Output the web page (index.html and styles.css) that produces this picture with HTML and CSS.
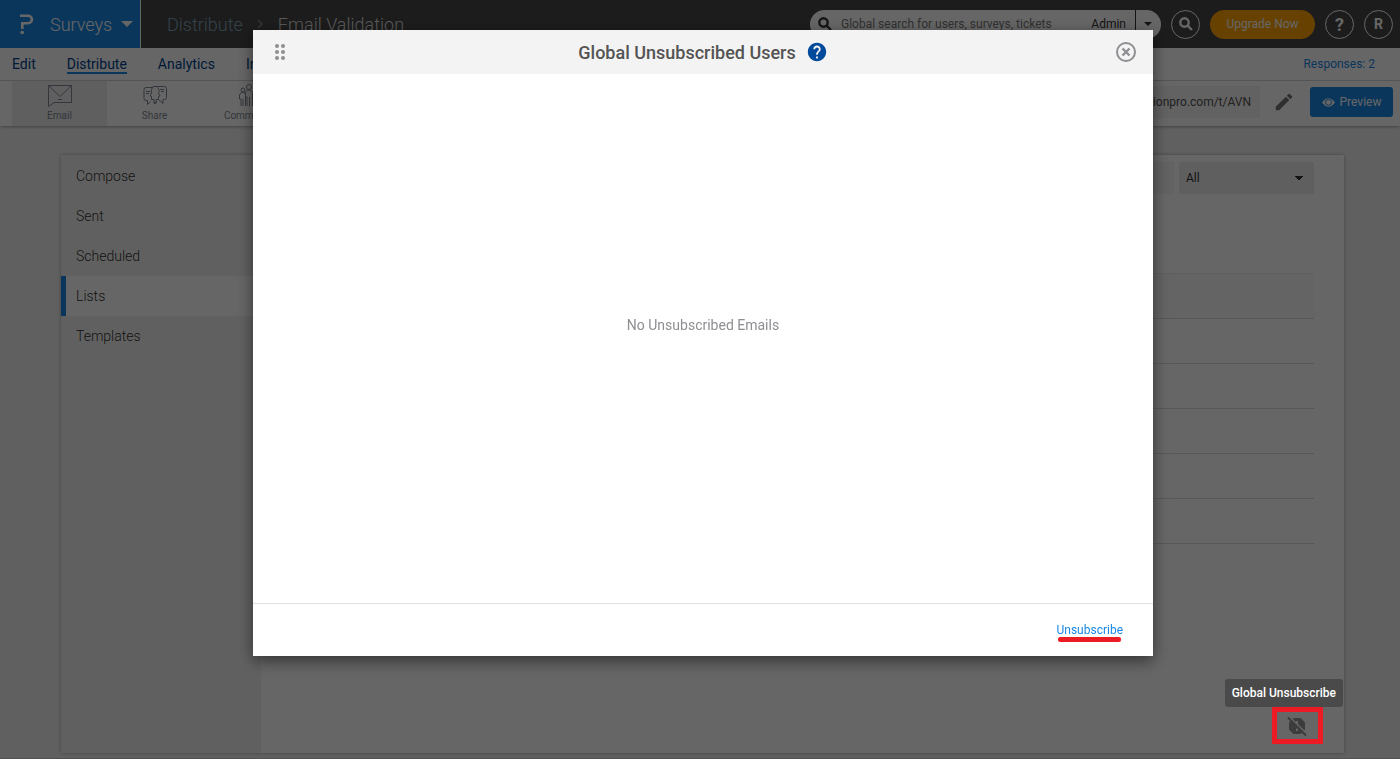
FILE: index.html
```html
<!DOCTYPE html>
<html lang="en">
<head>
    <meta charset="UTF-8">
    <meta name="viewport" content="width=device-width, initial-scale=1.0">
    <title>Email Validation</title>
    <link rel="stylesheet" href="styles.css">
</head>
<body>
    <header class="topbar">
        <button class="brand">
            <svg width="14" height="21" viewBox="0 0 14 21" fill="none" stroke="currentColor" stroke-width="2.600">
                <path d="M0 1.800h8.200a3.700 3.700 0 0 1 0 7.400H2.300V15"/>
                <circle cx="2.200" cy="18.500" r="1.800" fill="currentColor" stroke="none"/>
            </svg>
            <span>Surveys</span>
            <svg width="12" height="6" viewBox="0 0 12 6" fill="currentColor"><path d="M0 0h12L6 6z"/></svg>
        </button>
        <nav class="crumbs">
            <a href="#" class="crumb-link">Distribute</a>
            <svg width="7" height="10" viewBox="0 0 7 10" fill="none" stroke="currentColor" stroke-width="1.500"><path d="M1 1l4 4-4 4"/></svg>
            <span>Email Validation</span>
        </nav>
        <div class="top-actions">
            <div class="search">
                <svg width="14" height="14" viewBox="0 0 14 14" fill="none" stroke="currentColor" stroke-width="2.400"><circle cx="5.500" cy="5.500" r="4.200"/><path d="M8.600 8.600l4.400 4.400"/></svg>
                <input type="text" aria-label="Global search" placeholder="Global search for users, surveys, tickets">
                <span class="search-scope">Admin</span>
                <button class="search-toggle" aria-label="Change scope">
                    <svg width="8" height="4" viewBox="0 0 8 4" fill="currentColor"><path d="M0 0h8L4 4z"/></svg>
                </button>
            </div>
            <button class="circle" aria-label="Search">
                <svg width="14" height="14" viewBox="0 0 14 14" fill="none" stroke="currentColor" stroke-width="2.400"><circle cx="5.500" cy="5.500" r="4.200"/><path d="M8.600 8.600l4.400 4.400"/></svg>
            </button>
            <button class="upgrade">Upgrade Now</button>
            <button class="circle help" aria-label="Help">?</button>
            <button class="circle">R</button>
        </div>
    </header>

    <nav class="tabs">
        <a href="#">Edit</a>
        <a href="#" class="active">Distribute</a>
        <a href="#">Analytics</a>
        <a href="#">Integration</a>
        <a href="#" class="responses">Responses: 2</a>
    </nav>

    <div class="toolbar">
        <button class="tool active">
            <svg width="24" height="24" viewBox="0 0 24 24" fill="none" stroke="currentColor"><path d="M.5 1.500h23v17H6L.5 22.500zM.5 1.500L12 12.500l11.500-11M10 15.500h4"/></svg>
            <span>Email</span>
        </button>
        <button class="tool">
            <svg width="24" height="24" viewBox="0 0 24 24" fill="none" stroke="currentColor">
                <path d="M9 3.500H3a2 2 0 0 0-2 2v9a2 2 0 0 0 2 2h1.500v4l3-3M13 2.500h8.500a2 2 0 0 1 2 2v9a2 2 0 0 1-2 2H20v4l-4-3.500"/>
                <path d="M10 3.500c-2 1-2 3-1.500 5.500L7 12l1.500.5v3h2.500v4l3-2M14 3.500c2 1 3 3 1.500 5.500l1.500 3-1.500.5v3H13v4l-2-1M9 3.500l2-1h3M3 7.500h4M3 9.500h3M17 5.500h4M18 7.500h3"/>
            </svg>
            <span>Share</span>
        </button>
        <button class="tool">
            <svg width="24" height="24" viewBox="0 0 24 24" fill="none" stroke="currentColor">
                <circle cx="5" cy="6" r="2"/><circle cx="11" cy="3" r="2.500"/><circle cx="18" cy="6" r="2"/>
                <path d="M3 22v-7H1.500v-4l2-2.500h3l1 2V22M5 15v7M9 22V13H7.500V8.500l2-2.500h3l2 2.500V22M11.500 13v9M16.500 22v-7H15v-4l1.500-2.500h3l2 2.500v4H20v7M18.500 15v7"/>
            </svg>
            <span>Community</span>
        </button>
        <div class="share-link">
            <input type="text" aria-label="Survey link" value="questionpro.com/t/AVN">
            <button class="edit-link" aria-label="Edit link">
                <svg width="22" height="22" viewBox="0 0 24 24" fill="currentColor"><path d="M3 17.250V21h3.750L17.810 9.940l-3.750-3.750L3 17.250zM20.710 7.040a1 1 0 0 0 0-1.410l-2.340-2.340a1 1 0 0 0-1.410 0l-1.830 1.830 3.750 3.750 1.830-1.830z"/></svg>
            </button>
            <button class="preview">
                <svg width="13" height="9" viewBox="0 0 13 9"><path d="M0 4.500Q6.500-4 13 4.500 6.500 13 0 4.500z" fill="currentColor"/><circle cx="6.500" cy="4.300" r="3" fill="none" stroke="#1b87e6"/></svg>
                <span>Preview</span>
            </button>
        </div>
    </div>

    <main class="panel">
        <nav class="side">
            <a href="#">Compose</a>
            <a href="#">Sent</a>
            <a href="#">Scheduled</a>
            <a href="#" class="active">Lists</a>
            <a href="#">Templates</a>
        </nav>
        <section class="content">
            <div class="filters">
                <input type="text" aria-label="Search lists">
                <select aria-label="Filter lists">
                    <option>All</option>
                </select>
            </div>
            <table class="lists">
                <thead><tr><th></th></tr></thead>
                <tbody>
                    <tr><td></td></tr>
                    <tr><td></td></tr>
                    <tr><td></td></tr>
                    <tr><td></td></tr>
                    <tr><td></td></tr>
                </tbody>
            </table>
            <div class="global-unsub">
                <span class="tooltip" role="tooltip" id="unsubTip">Global Unsubscribe</span>
                <button aria-labelledby="unsubTip">
                    <svg width="20" height="20" viewBox="0 0 20 20">
                        <path d="M6.500 2h7L18 6.500v7L13.500 18h-7L2 13.500v-7z" fill="currentColor"/>
                        <path d="M10 5v5.500M10 12.500v2.500" stroke="#666" stroke-width="2"/>
                        <path d="M2 .5L20 18.500" stroke="#666" stroke-width="2"/>
                        <path d="M1 1.500L19 19.500" stroke="currentColor" stroke-width="2"/>
                    </svg>
                </button>
            </div>
        </section>
    </main>
    <footer class="page-end"></footer>

    <div class="overlay">
        <div class="modal" role="dialog" aria-modal="true" aria-labelledby="modalTitle">
            <div class="modal-header">
                <svg class="drag" width="10" height="16" viewBox="0 0 10 16" fill="currentColor"><circle cx="2" cy="2" r="2"/><circle cx="8" cy="2" r="2"/><circle cx="2" cy="8" r="2"/><circle cx="8" cy="8" r="2"/><circle cx="2" cy="14" r="2"/><circle cx="8" cy="14" r="2"/></svg>
                <h2 id="modalTitle">Global Unsubscribed Users
                    <svg width="22" height="22" viewBox="0 0 24 24" fill="currentColor"><path d="M12 2C6.480 2 2 6.480 2 12s4.480 10 10 10 10-4.480 10-10S17.520 2 12 2zm1 17h-2v-2h2v2zm2.070-7.750l-.9.92C13.450 12.900 13 13.500 13 15h-2v-.5c0-1.100.45-2.100 1.170-2.830l1.240-1.260c.37-.36.59-.86.59-1.410 0-1.100-.9-2-2-2s-2 .9-2 2H8c0-2.210 1.790-4 4-4s4 1.790 4 4c0 .88-.36 1.680-.93 2.250z"/></svg>
                </h2>
                <button class="close" aria-label="Close">
                    <svg width="20" height="20" viewBox="0 0 20 20" fill="none" stroke="currentColor"><circle cx="10" cy="10" r="9" stroke-width="2"/><path d="M6.500 6.500l7 7M13.500 6.500l-7 7" stroke-width="2.400"/></svg>
                </button>
            </div>
            <div class="modal-body">No Unsubscribed Emails</div>
            <div class="modal-footer">
                <button class="unsubscribe">Unsubscribe</button>
            </div>
        </div>
    </div>
</body>
</html>
```

FILE: styles.css
```css
* {
    margin: 0;
    padding: 0;
    box-sizing: border-box;
}

body {
    font-family: Roboto, "Open Sans", sans-serif;
    font-size: 14px;
    color: #545e6b;
    background: #f1f1f1;
    min-height: 100vh;
    display: flex;
    flex-direction: column;
}

a {
    color: inherit;
    text-decoration: none;
}

button,
input,
select {
    font: inherit;
    color: inherit;
    border: none;
    background: none;
}

button {
    cursor: pointer;
}

svg {
    flex: none;
}

/* Top bar */
.topbar {
    display: flex;
    align-items: center;
    height: 48px;
    background: #474747;
    color: #fff;
}

.brand {
    display: flex;
    align-items: center;
    width: 141px;
    height: 48px;
    padding: 0 7px 0 20px;
    background: #1b87e6;
    border-right: 1px solid #fff;
    font-size: 18px;
    font-weight: 300;
}

.brand span {
    margin: 0 auto 0 16px;
}

.crumbs {
    display: flex;
    align-items: center;
    gap: 14px;
    padding-left: 26px;
    font-size: 18px;
    font-weight: 300;
    color: #ddd;
}

.crumbs svg {
    color: #888;
}

.crumb-link {
    color: #7fa6b8;
}

.top-actions {
    display: flex;
    align-items: center;
    gap: 10px;
    margin-left: auto;
    padding-right: 7px;
}

.search {
    display: flex;
    align-items: center;
    width: 351px;
    height: 29px;
    padding-left: 8px;
    border-radius: 15px;
    background: #fff;
    color: #333;
}

.search input {
    flex: 1;
    min-width: 0;
    padding-left: 9px;
    font-size: 12px;
}

.search input::placeholder {
    color: #777;
}

.search-scope {
    padding-right: 9px;
    font-size: 12px;
}

.search-toggle {
    display: flex;
    align-items: center;
    width: 26px;
    height: 29px;
    padding-left: 8px;
    border-left: 1px solid #333;
}

.circle {
    display: flex;
    align-items: center;
    justify-content: center;
    width: 29px;
    height: 29px;
    border: 1px solid #fff;
    border-radius: 50%;
    font-weight: 700;
}

.help {
    font-size: 18px;
}

.upgrade {
    width: 105px;
    height: 29px;
    border-radius: 15px;
    background: #ffa300;
    font-size: 12px;
}

/* Main tabs */
.tabs {
    display: flex;
    align-items: center;
    gap: 31px;
    height: 33px;
    padding: 0 25px 0 12px;
    background: #fff;
    border-bottom: 1px solid #ddd;
    color: #003f8c;
}

.tabs .active {
    border-bottom: 2px solid #1b87e6;
    margin-top: 2px;
}

.tabs .responses {
    margin-left: auto;
    font-size: 12px;
    color: #1b87e6;
}

/* Distribution tools */
.toolbar {
    display: flex;
    height: 45px;
    padding: 0 7px 0 12px;
    background: #fff;
    box-shadow: 0 1px 3px rgba(0, 0, 0, 0.3);
    color: #808894;
}

.tool {
    display: flex;
    flex-direction: column;
    align-items: center;
    gap: 2px;
    width: 95px;
    padding-top: 3px;
    font-size: 10px;
}

.tool.active {
    background: #eee;
}

.share-link {
    display: flex;
    align-items: center;
    height: 42px;
    margin-left: auto;
    color: #545454;
}

.share-link input {
    width: 240px;
    height: 32px;
    padding-right: 9px;
    background: #f5f5f5;
    font-size: 12px;
    text-align: right;
}

.edit-link {
    display: flex;
    padding: 0 15px 0 13px;
    color: #777;
}

.preview {
    display: flex;
    align-items: center;
    justify-content: center;
    gap: 5px;
    width: 83px;
    height: 30px;
    border-radius: 3px;
    background: #1b87e6;
    color: #fff;
    font-size: 12px;
}

/* Panel */
.panel {
    flex: 1;
    display: flex;
    margin: 29px 56px 0 61px;
    background: #fff;
    box-shadow: 0 0 4px rgba(0, 0, 0, 0.3);
}

.side {
    width: 200px;
    background: #f1f1f1;
    font-weight: 300;
    color: #333;
}

.side a {
    display: block;
    padding-left: 15px;
    line-height: 40px;
}

.side .active {
    padding-left: 10px;
    border-left: 5px solid #1b87e6;
    background: #fff;
}

.side a:first-child {
    margin-top: 1px;
}

.content {
    flex: 1;
    display: flex;
    flex-direction: column;
    padding: 7px 30px 9px;
}

.filters {
    display: flex;
    justify-content: flex-end;
    gap: 5px;
    margin-bottom: 79px;
}

.filters input {
    width: 200px;
    background: #f5f5f5;
}

.filters select {
    width: 135px;
    height: 32px;
    padding: 0 7px;
    border-radius: 2px;
    appearance: none;
    background-color: #eee;
    background-image: conic-gradient(from -45deg at 50% 100%, #333 90deg, transparent 0);
    background-repeat: no-repeat;
    background-position: right 11px center;
    background-size: 8px 4px;
    font-size: 12px;
    color: #333;
}

.lists {
    width: 100%;
    border-collapse: collapse;
}

.lists th,
.lists td {
    height: 45px;
    border-bottom: 1px solid #ddd;
}

.lists th {
    background: #fafafa;
    border-top: 1px solid #eee;
}

/* Global unsubscribe shortcut, stays above the overlay */
.global-unsub {
    position: relative;
    z-index: 30;
    align-self: flex-end;
    margin-top: auto;
    margin-right: -9px;
    border: 5px solid #ed1c24;
}

.global-unsub button {
    display: flex;
    padding: 4px 11px 3px 10px;
    color: #3c3c3c;
}

.tooltip {
    position: absolute;
    bottom: 100%;
    right: -25px;
    margin-bottom: 5px;
    padding: 0 7px;
    border-radius: 3px;
    background: #4a4a4a;
    color: #fff;
    font-size: 12px;
    font-weight: 500;
    line-height: 28px;
    white-space: nowrap;
}

.page-end {
    margin-top: 5px;
    border-bottom: 1px solid #ccc;
}

/* Modal */
.overlay {
    position: fixed;
    inset: 0;
    z-index: 20;
    display: flex;
    justify-content: center;
    align-items: flex-start;
    padding: 30px 0 0 6px;
    background: rgba(0, 0, 0, 0.6);
}

.modal {
    width: 900px;
    max-width: 100%;
    background: #fff;
    box-shadow: 0 5px 15px rgba(0, 0, 0, 0.5);
}

.modal-header {
    display: grid;
    grid-template-columns: 1fr auto 1fr;
    align-items: center;
    height: 44px;
    padding: 0 17px;
    background: #f3f3f3;
    color: #8e8e93;
}

.drag {
    margin-left: 5px;
}

.modal-header h2 {
    display: flex;
    align-items: center;
    gap: 10px;
    font-size: 18px;
    font-weight: 500;
    color: #545454;
}

.modal-header h2 svg {
    color: #004a9c;
}

.close {
    display: flex;
    justify-self: end;
}

.modal-body {
    display: flex;
    align-items: center;
    justify-content: center;
    min-height: 529px;
    padding-bottom: 27px;
    color: #8e8e93;
}

.modal-footer {
    display: flex;
    justify-content: flex-end;
    padding: 16px 30px;
    border-top: 1px solid #e0e0e0;
}

.unsubscribe {
    position: relative;
    font-size: 12px;
    line-height: 20px;
    color: #1b87e6;
}

.unsubscribe::after {
    content: "";
    position: absolute;
    left: 2px;
    right: 2px;
    top: 100%;
    height: 5px;
    margin-top: -3px;
    border-radius: 2px;
    background: #ed1c24;
}
```
